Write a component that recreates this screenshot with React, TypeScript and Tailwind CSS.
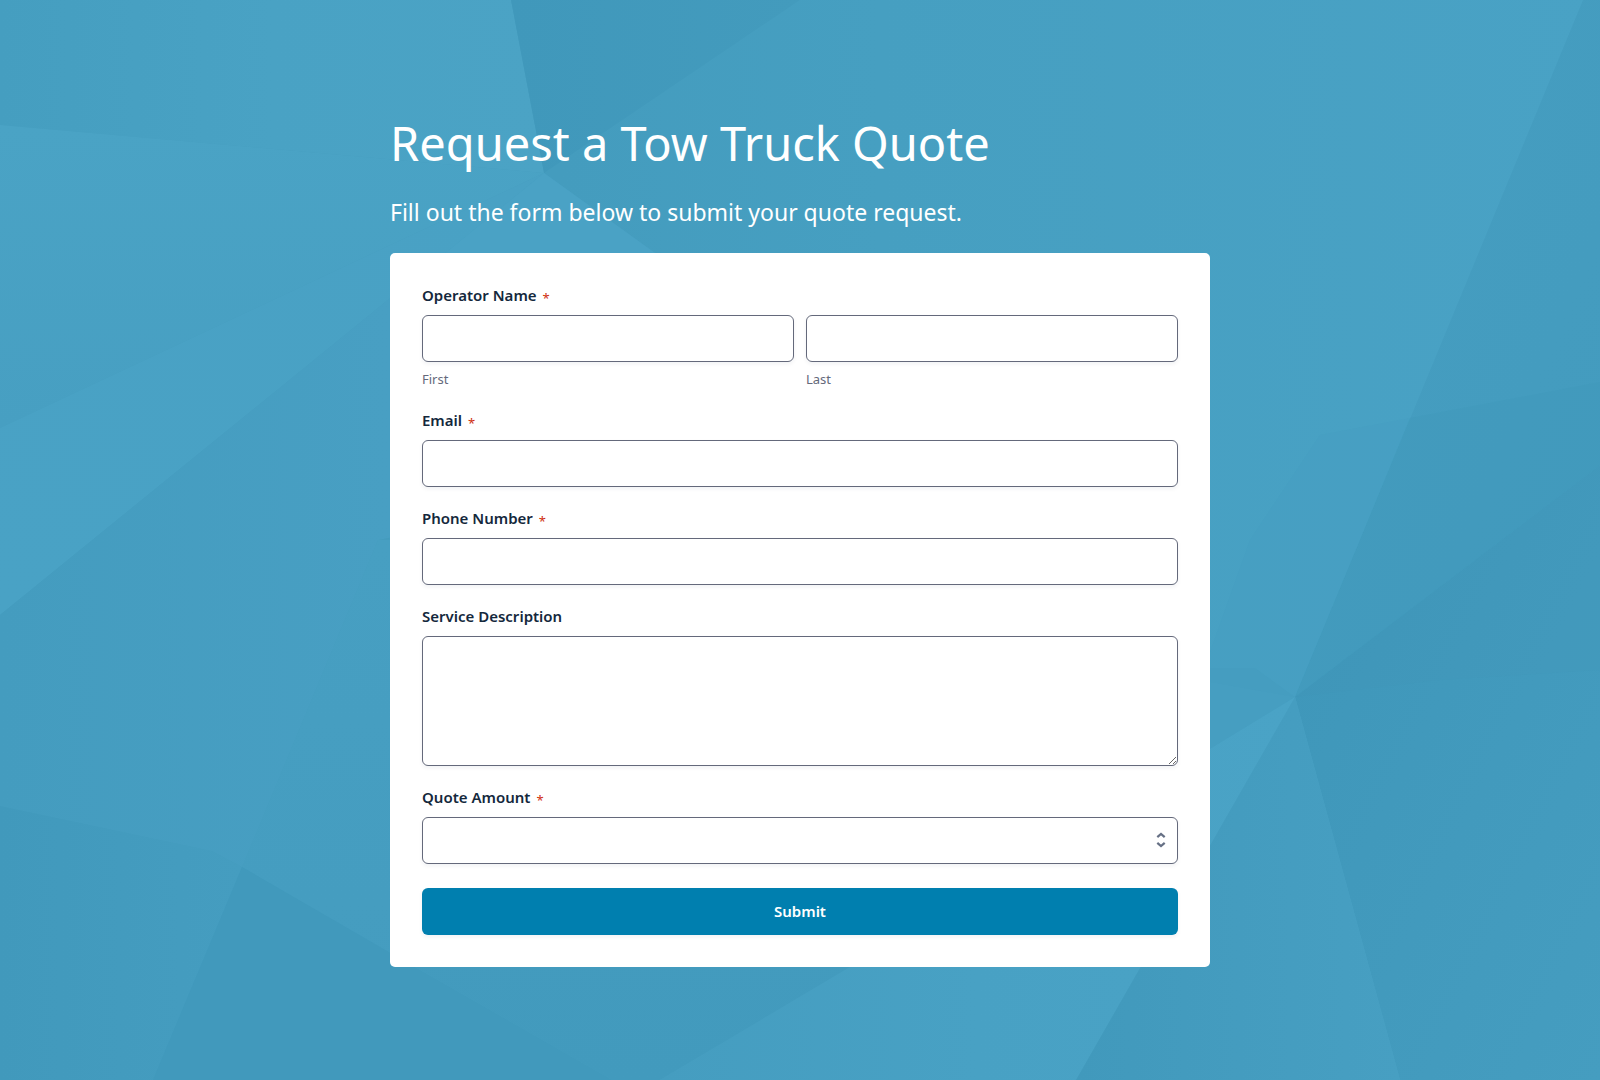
import React from "react";

const control =
  "block w-full rounded-md border border-[#64697b] bg-white px-3 text-base text-[#14283c] shadow-[0_2px_4px_rgba(20,30,60,0.06)] outline-none focus:border-[#007faf]";

function Backdrop() {
  return (
    <svg
      className="absolute inset-0 -z-10 h-full w-full"
      viewBox="0 0 1600 1080"
      preserveAspectRatio="xMidYMid slice"
      aria-hidden="true"
    >
      <defs>
        <linearGradient id="topLeft" x1="0" x2="1" y1="0" y2="0">
          <stop offset="0" stopColor="#459ec0" />
          <stop offset="0.5" stopColor="#49a2c4" />
          <stop offset="1" stopColor="#4ba3c5" />
        </linearGradient>
        <linearGradient id="leftFan" x1="0" x2="0" y1="0" y2="1">
          <stop offset="0" stopColor="#4aa3c5" />
          <stop offset="1" stopColor="#479fc2" />
        </linearGradient>
        <linearGradient id="leftBand" x1="0" x2="1" y1="1" y2="0">
          <stop offset="0" stopColor="#49a2c5" />
          <stop offset="1" stopColor="#49a1c4" />
        </linearGradient>
        <linearGradient id="lowerLeft" gradientUnits="userSpaceOnUse" x1="0" x2="390" y1="0" y2="0">
          <stop offset="0" stopColor="#449cbf" />
          <stop offset="1" stopColor="#489fc3" />
        </linearGradient>
        <linearGradient id="darkTop" x1="0" x2="1" y1="0" y2="0">
          <stop offset="0" stopColor="#4098bb" />
          <stop offset="1" stopColor="#439bbd" />
        </linearGradient>
        <linearGradient id="main" x1="0" x2="1" y1="0" y2="0">
          <stop offset="0" stopColor="#439bbd" />
          <stop offset="0.35" stopColor="#449cbe" />
          <stop offset="0.55" stopColor="#469fc1" />
          <stop offset="1" stopColor="#49a2c5" />
        </linearGradient>
        <linearGradient id="lowerMiddle" x1="0" x2="0" y1="0" y2="1">
          <stop offset="0" stopColor="#479fc2" />
          <stop offset="1" stopColor="#449cbf" />
        </linearGradient>
        <linearGradient id="bottomLeft" x1="0" x2="1" y1="0" y2="0">
          <stop offset="0" stopColor="#4199bc" />
          <stop offset="1" stopColor="#459dc0" />
        </linearGradient>
        <linearGradient id="bottom" x1="0" x2="0" y1="0" y2="1">
          <stop offset="0" stopColor="#439bbe" />
          <stop offset="1" stopColor="#429abd" />
        </linearGradient>
        <linearGradient id="shard" x1="0" x2="1" y1="0" y2="0">
          <stop offset="0" stopColor="#459dc0" />
          <stop offset="0.5" stopColor="#48a1c4" />
          <stop offset="1" stopColor="#4aa3c6" />
        </linearGradient>
        <linearGradient id="wedge" x1="0" x2="1" y1="0" y2="0">
          <stop offset="0" stopColor="#4199bc" />
          <stop offset="1" stopColor="#479fc2" />
        </linearGradient>
        <linearGradient id="darkRight" x1="0" x2="1" y1="0" y2="1">
          <stop offset="0" stopColor="#3e96b9" />
          <stop offset="1" stopColor="#459dc0" />
        </linearGradient>
        <linearGradient id="rightFan" x1="0" x2="1" y1="0" y2="1">
          <stop offset="0" stopColor="#469ec1" />
          <stop offset="1" stopColor="#439bbe" />
        </linearGradient>
      </defs>
      <path d="M0 0H1600V1080H0Z" fill="url(#main)" />
      <path d="M0 0H511L544 173L285 150L0 125Z" fill="url(#topLeft)" />
      <path d="M0 125L285 150L544 173L0 428Z" fill="url(#leftFan)" />
      <path d="M0 428L544 173L0 615Z" fill="url(#leftBand)" />
      <path d="M544 173L655 253L900 430L378 540L242 867L212 851L0 806V615Z" fill="url(#lowerLeft)" />
      <path d="M544 173L655 253L700 290H390V298Z" fill="#4aa2c5" />
      <path d="M511 0H800L544 173Z" fill="url(#darkTop)" />
      <path d="M378 540L242 867L470 1000L900 1080V540Z" fill="url(#lowerMiddle)" />
      <path d="M0 806L212 851L242 867L153 1080H0Z" fill="url(#bottomLeft)" />
      <path d="M242 867L420 970L612 1080H153Z" fill="#4199bc" />
      <path d="M390 950L420 970L612 1080H660L850 967V940Z" fill="url(#bottom)" />
      <path d="M1295 697L850 967L660 1080H1076Z" fill="url(#shard)" />
      <path d="M1295 697L1255 668H1200V755Z" fill="#469ec1" />
      <path d="M1583 0H1600V465L1295 697L1360 540Z" fill="url(#rightFan)" />
      <path d="M1600 382L1410 418L1360 540L1295 697L1600 465Z" fill="#4098bb" fillOpacity="0.45" />
      <path d="M1410 418L1320 435L1250 540L1200 680L1295 697L1360 540Z" fill="#459dc0" fillOpacity="0.25" />
      <path d="M1295 697L1600 465V1080H1400Z" fill="url(#darkRight)" />
      <path d="M1295 697L1600 465V670L1440 680Z" fill="#3e96b9" fillOpacity="0.12" />
      <path d="M1295 697L1400 1080H1076Z" fill="url(#wedge)" />
    </svg>
  );
}

function Star() {
  return (
    <span className="ml-1.5 align-[-2px] text-[13px] leading-none font-normal text-[#cf2e0e]" aria-hidden="true">
      *
    </span>
  );
}

type FieldProps = {
  id: string;
  label: string;
  required?: boolean;
  children: React.ReactNode;
};

function Field({ id, label, required, children }: FieldProps) {
  return (
    <div>
      <label htmlFor={id} className="mb-2 block text-[15px] leading-6 font-semibold">
        {label}
        {required && <Star />}
      </label>
      {children}
    </div>
  );
}

export default function App() {
  return (
    <main className="relative isolate min-h-screen overflow-hidden bg-[#469fc1] px-4 pt-[111px] pb-28 font-['Noto_Sans',sans-serif] text-[#14283c]">
      <Backdrop />
      <div className="mx-auto max-w-[820px]">
        <h1 className="text-[47px] leading-16 text-white">Request a Tow Truck Quote</h1>
        <p className="mt-[21px] text-[23px] leading-8 text-white">
          Fill out the form below to submit your quote request.
        </p>
        <form
          className="mt-[25px] flex flex-col gap-[19px] rounded-[5px] bg-white px-8 pt-[30px] pb-8"
          onSubmit={(e) => e.preventDefault()}
        >
          <fieldset>
            <legend className="mb-2 text-[15px] leading-6 font-semibold">
              Operator Name
              <Star />
            </legend>
            <div className="grid grid-cols-2 gap-3">
              <div>
                <input id="first" type="text" required className={`${control} h-[47px]`} />
                <label htmlFor="first" className="mt-2 block text-[13px] leading-[19px] text-[#64697b]">
                  First
                </label>
              </div>
              <div>
                <input id="last" type="text" required className={`${control} h-[47px]`} />
                <label htmlFor="last" className="mt-2 block text-[13px] leading-[19px] text-[#64697b]">
                  Last
                </label>
              </div>
            </div>
          </fieldset>
          <Field id="email" label="Email" required>
            <input id="email" type="email" required className={`${control} h-[47px]`} />
          </Field>
          <Field id="phone" label="Phone Number" required>
            <input id="phone" type="tel" required className={`${control} h-[47px]`} />
          </Field>
          <Field id="service" label="Service Description">
            <textarea id="service" className={`${control} h-[130px] resize-y py-2`} />
          </Field>
          <Field id="amount" label="Quote Amount" required>
            <div className="relative">
              <select id="amount" required defaultValue="" className={`${control} h-[47px] appearance-none`}>
                <option value=""></option>
              </select>
              <svg
                className="pointer-events-none absolute top-[15px] right-3 h-4 w-2.5"
                viewBox="0 0 10 16"
                fill="none"
                stroke="#667085"
                strokeWidth="2.2"
                aria-hidden="true"
              >
                <path d="M1.3 5.2L5 2L8.7 5.2M1.3 10.8L5 14L8.7 10.8" />
              </svg>
            </div>
          </Field>
          <button
            type="submit"
            className="mt-[5px] h-[47px] w-full cursor-pointer rounded-md bg-[#007faf] text-[15px] font-semibold text-white shadow-[0_2px_4px_rgba(20,30,60,0.06)]"
          >
            Submit
          </button>
        </form>
      </div>
    </main>
  );
}
